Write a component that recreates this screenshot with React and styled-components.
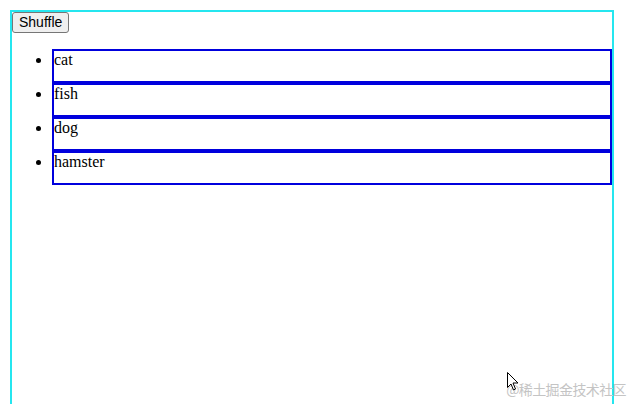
import React, { useState } from "react";
import styled, { createGlobalStyle } from "styled-components";

const GlobalStyle = createGlobalStyle`
    html, body {
        margin: 0;
        padding: 0;
        background: #ffffff;
        overflow: hidden;
    }
    body {
        font-family: 'Liberation Serif', 'Times New Roman', serif;
        font-size: 16px;
    }
`;

const Page = styled.div`
    position: relative;
    width: 630px;
    height: 404px;
    padding: 10px 0 0 10px;
    box-sizing: border-box;
    overflow: hidden;
`;

const Wrapper = styled.div`
    width: 600px;
    height: 500px;
    border: 2px solid #25e6ef;
`;

const ShuffleButton = styled.button`
    display: block;
    margin: 0;
    height: 21px;
    padding: 0 6px;
    font-family: 'Liberation Sans', Arial, sans-serif;
    font-size: 14px;
    line-height: 19px;
    color: #000;
    background: #efefef;
    border: 1px solid #767676;
    border-radius: 3px;
`;

const List = styled.ul`
    margin: 16px 0 0;
    padding-left: 40px;
    list-style: disc;
`;

const Item = styled.li`
    height: 30px;
    border: 2px solid #0000dd;
    line-height: 18px;
    font-family: 'Liberation Serif', 'Times New Roman', serif;
    font-size: 16px;
    color: #000;
`;

const Watermark = styled.div`
    position: absolute;
    right: 4px;
    bottom: 5px;
    font-family: 'Noto Sans CJK SC', sans-serif;
    font-size: 14px;
    color: #c4c4c4;
    letter-spacing: -0.6px;
`;

const Cursor = styled.svg`
    position: absolute;
    left: 507px;
    top: 372px;
`;

export default function App() {
    const [items, setItems] = useState(["cat", "fish", "dog", "hamster"]);

    const shuffle = () => {
        const next = [...items];
        for (let i = next.length - 1; i > 0; i--) {
            const j = Math.floor(Math.random() * (i + 1));
            [next[i], next[j]] = [next[j], next[i]];
        }
        setItems(next);
    };

    return (
        <Page>
            <GlobalStyle />
            <Wrapper>
                <ShuffleButton onClick={shuffle}>Shuffle</ShuffleButton>
                <List>
                    {items.map((item) => (
                        <Item key={item}>{item}</Item>
                    ))}
                </List>
            </Wrapper>
            <Watermark>@稀土掘金技术社区</Watermark>
            <Cursor width="12" height="19" viewBox="0 0 12 19">
                <path d="M0.5 0.5 L0.5 15.5 L4 12 L6.5 18 L8.5 17 L6 11 L11 11 Z" fill="#fff" stroke="#000" strokeWidth="1" />
            </Cursor>
        </Page>
    );
}
